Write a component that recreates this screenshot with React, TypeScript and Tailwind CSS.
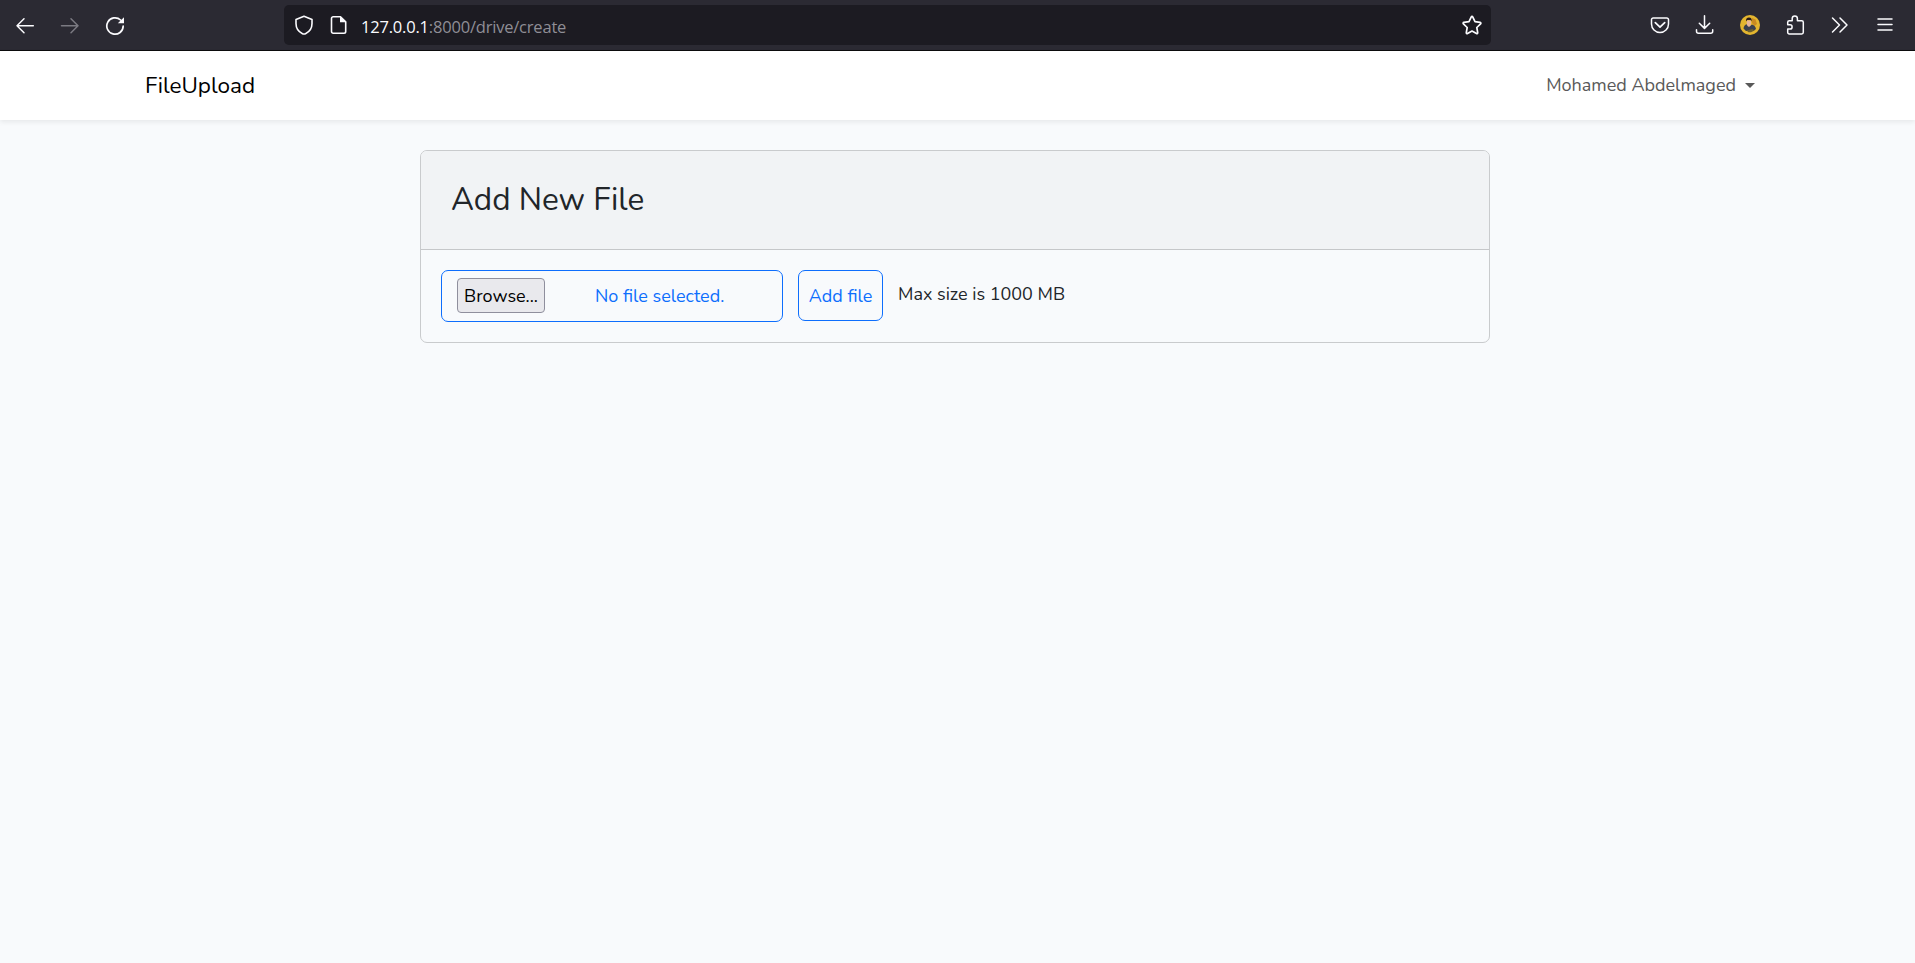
import React from "react";

type IconProps = { children: React.ReactNode; className?: string };

function Icon({ children, className = "" }: IconProps) {
  return (
    <svg
      width="20"
      height="20"
      viewBox="0 0 20 20"
      fill="none"
      stroke="currentColor"
      strokeWidth="1.5"
      strokeLinecap="round"
      strokeLinejoin="round"
      className={`shrink-0 ${className}`}
    >
      {children}
    </svg>
  );
}

function Avatar() {
  return (
    <svg width="20" height="20" viewBox="0 0 20 20" className="shrink-0">
      <circle cx="10" cy="10" r="10" fill="#e3b52f" />
      <path d="M12 3l3.500 1.500 1.500 4.500-2.500 2-2.500-3z" fill="#c98a22" />
      <path d="M3.500 13.500c.3-2.300 1.300-3.700 3.300-4.300l2.700 2 2.500-1.700c2.400.8 3.700 2.300 4 4.500l-2.500 2H6z" fill="#39404f" />
      <path d="M6.800 5.500h4.200v3.300c0 1.500-.9 2.900-2.100 2.900s-2.100-1.400-2.100-2.900z" fill="#e6b49c" />
      <path d="M6.100 6.500C5.600 3.900 7 2.500 9 2.500s3.200 1.400 2.500 4L10.600 5H7.200z" fill="#2a1c1a" />
      <path d="M6.500 15.500l6-1.500 2 1.500-3.500 1.700H8.500z" fill="#6b5f2e" />
    </svg>
  );
}

function BrowserToolbar() {
  return (
    <header className="flex h-[51px] items-start border-b border-[#0c0c0d] bg-[#2b2a33] text-[#fbfbfe]">
      <div className="flex w-[284px] gap-[25px] pl-[15px] pt-[16px]">
        <Icon>
          <path d="M18.300 9.700H2M9 2.700L2 9.700l7 7" />
        </Icon>
        <Icon className="text-[#7b7a82]">
          <path d="M1.500 9.700h16.300M11 2.700l7 7-7 7" />
        </Icon>
        <Icon>
          <path d="M18.200 10A8.200 8.200 0 1 1 15.600 4" strokeWidth="1.700" />
          <path d="M19 1.200v6h-6.200z" fill="currentColor" stroke="none" />
        </Icon>
      </div>
      <div className="mt-[5px] flex h-[40px] w-[1207px] items-center rounded-[5px] bg-[#1c1b22] pl-[10px] pr-[9px]">
        <Icon>
          <path d="M10 1.200L18 4.500v4c0 4.500-3 8.500-6.500 10.200q-1.500.7-3 0C5 17 2 13 2 8.500v-4z" strokeWidth="1.600" />
        </Icon>
        <Icon className="ml-[15px]">
          <path d="M4.500 1.800h7l5.200 5v9.700a1.700 1.700 0 0 1-1.700 1.700H4.200a1.700 1.700 0 0 1-1.700-1.700V3.500a1.700 1.700 0 0 1 1.700-1.700z" strokeWidth="1.600" />
          <path d="M11 1.500v5.800h5.800z" fill="currentColor" stroke="none" />
        </Icon>
        <div className="ml-[12px] mt-[3px] grow whitespace-nowrap font-['Open_Sans','Noto_Sans',sans-serif] text-[16.500px] leading-[24px] tracking-[-0.200px] text-[#8f8e96]">
          <span className="text-[#fbfbfe]">127.0.0.1</span>
          <span>:8000/drive/create</span>
        </div>
        <Icon>
          <path d="M9.300 1.800a.8.8 0 0 1 1.400 0l2.300 4.900 5.200.7a.8.8 0 0 1 .4 1.400l-3.800 3.700.9 5.200a.8.8 0 0 1-1.200.8L10 16l-4.500 2.500a.8.8 0 0 1-1.200-.8l.9-5.200L1.400 8.800a.8.8 0 0 1 .4-1.400L7 6.700z" strokeWidth="1.700" />
        </Icon>
      </div>
      <div className="flex grow justify-end gap-[25px] pr-[20px] pt-[15px]">
        <Icon>
          <path d="M3.200 3h13.600A1.700 1.700 0 0 1 18.500 4.700V9a8.500 8.500 0 0 1-17 0V4.700A1.700 1.700 0 0 1 3.200 3z" />
          <path d="M5.300 7.700l4.700 4.500 4.700-4.500" strokeWidth="1.700" />
        </Icon>
        <Icon>
          <path d="M9.500 .8v12.500M4.300 8.200l5.200 5.200 5.200-5.200M1.500 14.800v1.500a2 2 0 0 0 2 2h12.200a2 2 0 0 0 2-2v-1.500" />
        </Icon>
        <Avatar />
        <Icon>
          <path d="M7.200 5.700V3.500a2.600 2.600 0 0 1 5.200 0v2.200h4.300a1.600 1.600 0 0 1 1.600 1.600v10a1.600 1.600 0 0 1-1.600 1.600H4.300a1.600 1.600 0 0 1-1.600-1.600v-3.300H5a2.100 2.100 0 0 0 0-4.200H2.700V7.300A1.600 1.600 0 0 1 4.300 5.700z" />
        </Icon>
        <Icon>
          <path d="M2.500 3l7 7-7 7M10 3l7 7-7 7" />
        </Icon>
        <Icon>
          <path d="M3 4h14M3 9.500h14M3 15h14" />
        </Icon>
      </div>
    </header>
  );
}

function Navbar() {
  return (
    <nav className="flex h-[69px] items-center justify-between bg-white pl-[145px] pr-[160px] shadow-[0_2px_5px_rgba(0,0,0,0.075)]">
      <a href="#" className="whitespace-nowrap text-[22.500px] leading-[34px] text-black">
        FileUpload
      </a>
      <a href="#" className="flex items-center gap-[9px] whitespace-nowrap text-[18px] leading-[27px] text-[#595959]">
        <span>Mohamed Abdelmaged</span>
        <span className="h-0 w-0 border-x-[5px] border-t-[5px] border-x-transparent border-t-[#595959]" />
      </a>
    </nav>
  );
}

function UploadCard() {
  return (
    <section className="ml-[420px] mt-[30px] w-[1070px] overflow-hidden rounded-[7px] border border-[#c9cbcd]">
      <div className="flex h-[99px] items-center border-b border-[#c5c7c9] bg-[#f1f3f5] pl-[30px]">
        <h1 className="whitespace-nowrap text-[31.500px] leading-[38px] text-[#212529]">Add New File</h1>
      </div>
      <form className="flex h-[92px] items-start gap-[15px] px-[20px] pt-[20px] text-[18px] leading-[27px]">
        <div className="flex h-[52px] w-[342px] items-start rounded-[7px] border border-[#0d6efd] pl-[15px] pt-[7px]">
          <button type="button" className="h-[35px] w-[88px] whitespace-nowrap rounded-[4px] border border-[#8f8f9d] bg-[#e9e9ed] pt-[2px] text-black">
            Browse...
          </button>
          <span className="ml-[50px] mt-[5px] whitespace-nowrap text-[#0d6efd]">No file selected.</span>
        </div>
        <button type="button" className="h-[51px] w-[85px] whitespace-nowrap rounded-[7px] border border-[#0d6efd] pt-[2px] text-[#0d6efd]">
          Add file
        </button>
        <span className="mt-[11px] whitespace-nowrap text-[#212529]">Max size is 1000 MB</span>
      </form>
    </section>
  );
}

export default function App() {
  return (
    <div className="h-[963px] w-full overflow-hidden bg-[#f8fafc] font-['Nunito','Lato',sans-serif]">
      <BrowserToolbar />
      <Navbar />
      <UploadCard />
    </div>
  );
}
